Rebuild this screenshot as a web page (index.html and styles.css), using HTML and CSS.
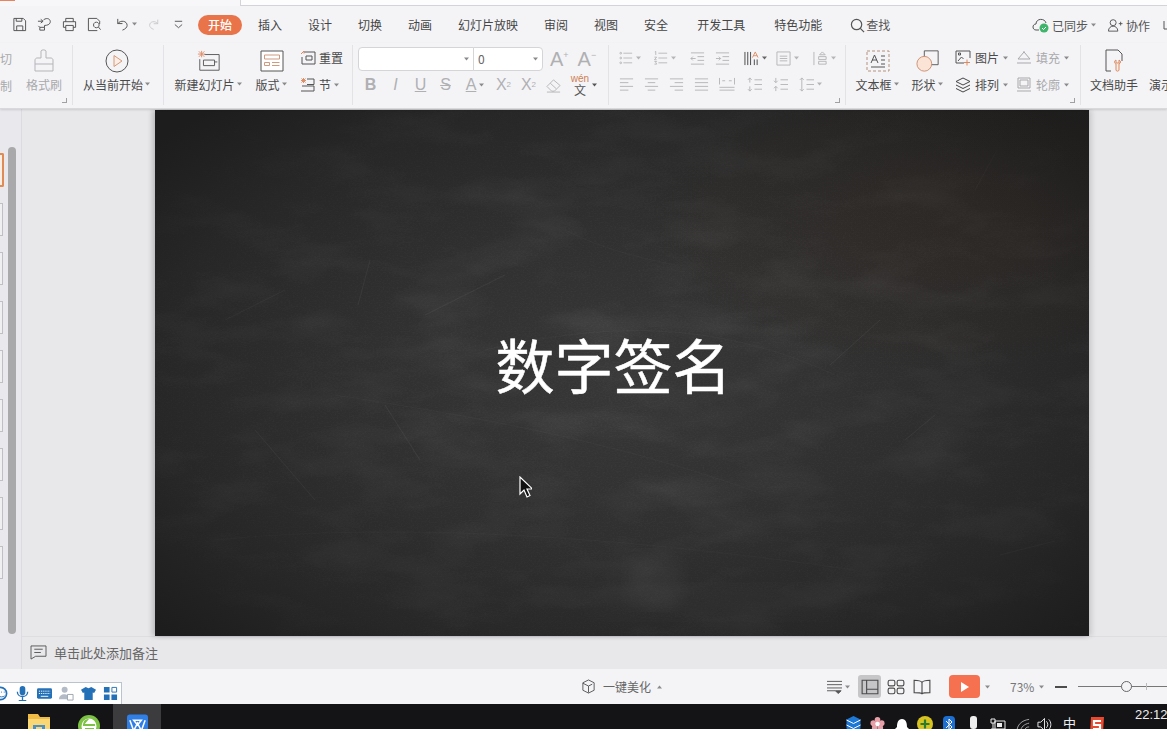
FILE: index.html
```html
<!DOCTYPE html>
<html lang="zh">
<head>
<meta charset="utf-8">
<title>数字签名</title>
<link rel="stylesheet" href="styles.css">
</head>
<body>
<svg class="defs" width="0" height="0">
  <symbol id="caret" viewBox="0 0 6 4"><path d="M0 .5h5L2.500 3.500z" fill="currentColor"/></symbol>
</svg>
<div class="app">
  <div class="topstrip"><span class="accent"></span><span class="docline"></span></div>

  <header class="menubar">
    <div class="quick">
      <svg class="q" viewBox="0 0 16 16"><path d="M2 1.500h10l2.500 2.500v10.500h-12.500zM5 14.500v-5h6.500v5M4.500 1.500v3h6v-3"/></svg>
      <svg class="q" viewBox="0 0 16 16"><path d="M1 4.500h5M4 2.500l2.500 2-2.500 2M7 3c4-3 8-.5 7 3-.6 2-3 3-6 3v2M8 11h-5v3h5zM3 11l-1.500-1.500"/></svg>
      <svg class="q" viewBox="0 0 16 16"><path d="M4 5v-3.500h8v3.500M4 11h-2.500v-6h13v6h-2.500M4 9h8v5.500h-8z"/></svg>
      <svg class="q" viewBox="0 0 16 16"><path d="M11 14.500h-9.500v-13h9l3 3v3M10 5.500a3 3 0 1 1-.1 0M12 10.500l2.500 3"/></svg>
      <svg class="q undo" viewBox="0 0 16 16"><path d="M4 2v5h5M4 7c3-4 10-3 10 2 0 2-2 4-5 5"/></svg>
      <svg class="car q-car"><use href="#caret"/></svg>
      <svg class="q redo" viewBox="0 0 16 16"><path d="M12 2v5h-5M12 7c-3-4-10-3-10 2 0 2 2 4 5 5"/></svg>
      <svg class="q more" viewBox="0 0 12 12"><path d="M2 2.500h8M2 6l4 3.500 4-3.500"/></svg>
    </div>
    <nav class="tabs">
      <span class="tab on">开始</span>
      <span class="tab t1">插入</span>
      <span class="tab t2">设计</span>
      <span class="tab t2">切换</span>
      <span class="tab t2">动画</span>
      <span class="tab t2">幻灯片放映</span>
      <span class="tab t3">审阅</span>
      <span class="tab t2">视图</span>
      <span class="tab t2">安全</span>
      <span class="tab t4">开发工具</span>
      <span class="tab t5">特色功能</span>
      <span class="search"><svg viewBox="0 0 16 16"><circle cx="7" cy="7" r="5.500"/><path d="M11 11l4 4"/></svg>查找</span>
    </nav>
    <div class="account">
      <span class="sync"><svg viewBox="0 0 18 16"><path d="M7 13h-3c-4 0-4-6 0-6 0-6 9-6 10-1" fill="none" stroke="#555"/><circle cx="12" cy="11" r="4.500" fill="#3fb56b"/><path d="M10 11l1.500 1.500 2.500-2.500" stroke="#fff" fill="none"/></svg>已同步<svg class="car"><use href="#caret"/></svg></span>
      <span class="collab"><svg viewBox="0 0 16 16"><circle cx="6" cy="5" r="3.200"/><path d="M1 14c0-7 10-7 10 0zM12 6h4M14 4v4"/></svg>协作</span>
      <svg class="cut-icon" viewBox="0 0 8 12"><path d="M1 2v8h7"/></svg>
    </div>
  </header>

  <section class="ribbon">
    <div class="grp g1">
      <div class="clip-col"><span class="clip">剪切</span><span class="clip">复制</span></div>
      <div class="big off painter">
        <svg class="bi" viewBox="0 0 22 24"><path d="M8 9v-7c0-1.500 5-1.500 5 0v7h5c1 0 2 1 2 2v4h-18v-4c0-1 1-2 2-2zM2 15v7h18v-7"/></svg>
        <span>格式刷</span>
      </div>
      <i class="corner"></i>
    </div>

    <div class="grp g2">
      <div class="big">
        <svg class="bi" viewBox="0 0 24 24"><circle cx="12" cy="12" r="11" fill="none" stroke="#555"/><path d="M9 6.500l8 5.500-8 5.500z" fill="#fbeee6" stroke="#d59a79"/></svg>
        <span>从当前开始<svg class="car"><use href="#caret"/></svg></span>
      </div>
    </div>

    <div class="grp g3">
      <div class="big new-slide">
        <svg class="bi wide" viewBox="0 0 26 24"><path d="M8 5h16v17h-21v-12M7 11h12v6h-12zM19 13h3" fill="none"/><path d="M2 1.500l6 6M8 1.500l-6 6M1 4.500h8M5 1v7" stroke="#de8e68"/></svg>
        <span>新建幻灯片<svg class="car"><use href="#caret"/></svg></span>
      </div>
      <div class="big layout">
        <svg class="bi wide" viewBox="0 0 24 22"><path d="M1 1h22v20h-22z" fill="#fff"/><path d="M4.500 5h15v4h-15zM4.500 12.500h5v3h-5zM12 12.500h7.500M12 15.500h7.500" stroke="#cf9a80"/></svg>
        <span>版式<svg class="car"><use href="#caret"/></svg></span>
      </div>
      <div class="stack">
        <div class="mini"><svg viewBox="0 0 16 16"><path d="M4 2h11v12h-13v-7M6 6h6v4h-6z"/><path d="M1 4l3-3v2.500" stroke="#d98a63"/></svg>重置</div>
        <div class="mini"><svg viewBox="0 0 16 16"><path d="M7 2h7v5.500h-7M2 9h12v5h-13"/><path d="M1.500 1.500l4 4M5.500 1.500l-4 4M1 3.500h5M3.500 1v5" stroke="#de8e68"/></svg>节<svg class="car"><use href="#caret"/></svg></div>
      </div>
    </div>

    <div class="grp g4">
      <div class="row r-top">
        <div class="field fname"><svg class="car"><use href="#caret"/></svg></div>
        <div class="field fsize"><span>0</span><svg class="car"><use href="#caret"/></svg></div>
        <span class="grow-a a1">A<sup>+</sup></span>
        <span class="grow-a a2">A<sup>−</sup></span>
      </div>
      <div class="row r-fmt">
        <b class="cell latin">B</b>
        <i class="cell latin">I</i>
        <span class="cell latin ul">U</span>
        <span class="cell latin st">S</span>
        <span class="cell acolor latin">A<svg class="car"><use href="#caret"/></svg></span>
        <span class="cell latin">X<sup>2</sup></span>
        <span class="cell latin">X<sub>2</sub></span>
        <span class="cell"><svg class="s16" viewBox="0 0 16 16"><path d="M1 9l7-7 7 6-6 6h-3zM4.500 5.500l6.500 6M1 15h14"/></svg></span>
        <span class="cell wen"><em>wén</em><u>文</u></span><svg class="car wen-car"><use href="#caret"/></svg>
      </div>
    </div>

    <div class="grp g5">
      <div class="row p1">
        <svg class="s16 p-a" viewBox="0 0 16 16"><path d="M5 2.500h10M5 8h10M5 13.500h10"/><circle cx="2" cy="2.500" r="1"/><circle cx="2" cy="8" r="1"/><circle cx="2" cy="13.500" r="1"/></svg><svg class="car pc"><use href="#caret"/></svg>
        <svg class="s16 p-b" viewBox="0 0 16 16"><path d="M5 2.500h10M5 8h10M5 13.500h10M1 1l1-.5v4M.5 7h2.500l-2.500 3h2.500M.5 12h2.500l-1 1 1 2h-2.500"/></svg><svg class="car pc"><use href="#caret"/></svg>
        <svg class="s16 p-c" viewBox="0 0 16 16"><path d="M1 2h14M8 6h7M8 10h7M1 14h14M6 8h-5M3 6l-2 2 2 2"/></svg>
        <svg class="s16 p-d" viewBox="0 0 16 16"><path d="M1 2h14M8 6h7M8 10h7M1 14h14M1 8h5M4 6l2 2-2 2"/></svg>
        <svg class="s16 p-e dark" viewBox="0 0 16 16"><path d="M1 1v14M4 1v14M7 1v14M11 15v-6M14 15v-6"/><path d="M9 7l3-6 3 6M10 5h4" stroke="#de8e68"/></svg><svg class="car pc dk"><use href="#caret"/></svg>
        <svg class="s16 p-f" viewBox="0 0 16 16"><path d="M1 1h14v14h-14zM4 5.500h8M4 8h8M4 10.500h8"/></svg><svg class="car pc"><use href="#caret"/></svg>
        <svg class="s16 p-g" viewBox="0 0 16 16"><path d="M1 1v14M10 1l3 3h-6zM6 6h8v3h-8zM6 11h8v3h-8z"/></svg><svg class="car pc"><use href="#caret"/></svg>
      </div>
      <div class="row p2">
        <svg class="s16 a-a" viewBox="0 0 16 16"><path d="M1 2h14M1 6h9M1 10h14M1 14h9"/></svg>
        <svg class="s16 a-a" viewBox="0 0 16 16"><path d="M1 2h14M4 6h8M1 10h14M4 14h8"/></svg>
        <svg class="s16 a-a" viewBox="0 0 16 16"><path d="M1 2h14M6 6h9M1 10h14M6 14h9"/></svg>
        <svg class="s16 a-a" viewBox="0 0 16 16"><path d="M1 2h14M1 6h14M1 10h14M1 14h14"/></svg>
        <svg class="s16 a-b" viewBox="0 0 18 16"><path d="M1 1v7M17 1v7M4 4h3M11 4h3M1 11h16M1 14h16"/></svg>
        <svg class="s16 a-c" viewBox="0 0 16 16"><path d="M3 1v5M1 3l2-2 2 2M3 15v-5M1 13l2 2 2-2M8 3h8M8 8h8M8 13h8"/></svg>
        <svg class="s16 a-c" viewBox="0 0 16 16"><path d="M3 1v5M1 4l2 2 2-2M3 15v-5M1 12l2-2 2 2M8 3h8M8 8h8M8 13h8"/></svg>
        <svg class="s16 a-c" viewBox="0 0 16 16"><path d="M3 1v14M1 3l2-2 2 2M1 13l2 2 2-2M8 3h8M8 8h8M8 13h8"/></svg><svg class="car pc"><use href="#caret"/></svg>
      </div>
      <i class="corner"></i>
    </div>

    <div class="grp g6">
      <div class="big tb">
        <svg class="bi wide" viewBox="0 0 24 22"><path d="M1 1h22v20h-22z" stroke-dasharray="3 2" stroke="#b5927e"/><path d="M5 13l3.500-8 3.500 8M6 10h5M15 6h4M15 10h4M15 14h4M5 17h14"/></svg>
        <span>文本框<svg class="car"><use href="#caret"/></svg></span>
      </div>
      <div class="big shp">
        <svg class="bi wide" viewBox="0 0 26 24"><path d="M9 1h15v15h-15z"/><circle cx="9" cy="15" r="8" fill="#fbe3d6" stroke="#c98f70"/></svg>
        <span>形状<svg class="car"><use href="#caret"/></svg></span>
      </div>
      <div class="stack st-b">
        <div class="mini m2"><svg viewBox="0 0 16 16"><path d="M9 13h-8v-12h14v7M3 11l3.500-4 2 2M3.500 3h2v2h-2z"/><path d="M12 9.500v6M9 12.500h6" stroke="#d98a63"/></svg>图片<svg class="car"><use href="#caret"/></svg></div>
        <div class="mini m2"><svg viewBox="0 0 16 16"><path d="M8 1l7 3.500-7 3.500-7-3.500zM1 8l7 3.500 7-3.500M1 11.500l7 3.500 7-3.500" stroke="#444"/></svg>排列<svg class="car"><use href="#caret"/></svg></div>
      </div>
      <div class="stack st-c">
        <div class="mini m2 off"><svg viewBox="0 0 16 16"><path d="M2 9l6-7 6 7zM1 13h14M8 2v-1" stroke="#a9a9ac"/></svg>填充<svg class="car"><use href="#caret"/></svg></div>
        <div class="mini m2 off"><svg viewBox="0 0 16 16"><path d="M2 1h12v10h-12zM4 3h8v6h-8zM1 14h14" stroke="#a9a9ac"/></svg>轮廓<svg class="car"><use href="#caret"/></svg></div>
      </div>
      <i class="corner"></i>
    </div>

    <div class="grp g7">
      <div class="big doc">
        <svg class="bi wide" viewBox="0 0 20 24"><path d="M7 22h-5v-21h12l4 4v7"/><path d="M12 11c-2 1-2 3 0 4v6c0 1.500 3 1.500 3 0v-6c2-1 2-3 0-4v3h-3z" stroke="#d98a63" fill="#fbeee6"/></svg>
        <span>文档助手</span>
      </div>
      <div class="big demo">
        <svg class="bi wide" viewBox="0 0 20 24"><path d="M16 3v3M14 4h5"/></svg>
        <span>演示工具</span>
      </div>
    </div>
  </section>

  <main class="work">
    <aside class="thumbs">
      <div class="thumb sel"></div>
      <div class="thumb"></div><div class="thumb"></div><div class="thumb"></div><div class="thumb"></div>
      <div class="thumb"></div><div class="thumb"></div><div class="thumb"></div><div class="thumb"></div>
      <div class="scroll"></div>
    </aside>
    <div class="editor">
      <div class="stage">
        <div class="slide">
          <svg class="chalk" viewBox="0 0 934 526" preserveAspectRatio="none">
            <defs>
              <filter id="cloud" x="0" y="0" width="100%" height="100%">
                <feTurbulence type="fractalNoise" baseFrequency="0.012 0.03" numOctaves="5" seed="12"/>
                <feColorMatrix values="0 0 0 0 1  0 0 0 0 1  0 0 0 0 1  0.9 0.9 0 0 -0.8"/>
              </filter>
              <filter id="grain" x="0" y="0" width="100%" height="100%">
                <feTurbulence type="fractalNoise" baseFrequency="0.5 0.8" numOctaves="2" seed="9"/>
                <feColorMatrix values="0 0 0 0 1  0 0 0 0 1  0 0 0 0 1  0.5 0 0 0 -0.18"/>
              </filter>
              <filter id="soft"><feGaussianBlur stdDeviation="8 14"/></filter>
              <radialGradient id="mask-g" cx="50%" cy="52%" r="62%">
                <stop offset="0" stop-color="#fff"/><stop offset=".75" stop-color="#888"/><stop offset="1" stop-color="#222"/>
              </radialGradient>
              <mask id="vig"><rect width="934" height="526" fill="url(#mask-g)"/></mask>
            </defs>
            <g mask="url(#vig)">
              <rect width="934" height="526" filter="url(#cloud)" opacity=".1"/>
              <rect width="934" height="526" filter="url(#grain)" opacity=".14"/>
              <g class="scratch">
                <path d="M270 205l80-40M130 180l-60 30M675 255l50-45M820 80l22-40M750 330l30-25M215 150l-12 45M230 295l35 55M845 445l55-14M100 320l60 70"/>
                <path class="faint" d="M180 285c130 20 280 45 430 100M330 240c90-20 210-40 350 25M60 430c200-20 430 0 640 30M410 120c30 15 60 25 110 35"/>
              </g>
              <ellipse cx="500" cy="470" rx="28" ry="26" fill="#8b8b8b" opacity=".14" filter="url(#soft)"/>
              <ellipse cx="560" cy="492" rx="130" ry="16" fill="#777" opacity=".1" filter="url(#soft)"/>
            </g>
          </svg>
          <h1 class="title">数字签名</h1>
          <svg class="pointer" viewBox="0 0 13 22"><path d="M1 1v17l4-4 3 7 3-1.500-3-6.500h5.500z" fill="#111" stroke="#fff" stroke-width="1.200"/></svg>
        </div>
      </div>
      <div class="notes">
        <svg viewBox="0 0 18 16"><path d="M1 1h16v11h-11l-5 3zM4.500 4.500h9M4.500 8h7"/></svg>
        <span>单击此处添加备注</span>
      </div>
    </div>
  </main>

  <footer class="status">
    <div class="ime">
      <svg class="ime-i smile" viewBox="0 0 16 16"><circle cx="8" cy="8" r="6.500" fill="none" stroke="#2571b8" stroke-width="1.800"/><path d="M9 6v1M12 6v1M5.500 10.500c2 1.500 5 1.500 7 0" stroke="#2571b8" fill="none"/></svg>
      <svg class="ime-i" viewBox="0 0 16 16"><rect x="5" y="0" width="6" height="10" rx="3" fill="#2571b8"/><path d="M2.500 6c0 7 11 7 11 0M8 12v3M4 15.500h8" stroke="#2571b8" fill="none" stroke-width="1.400"/></svg>
      <svg class="ime-i" viewBox="0 0 16 16"><rect x="0" y="2.500" width="16" height="11" rx="1.500" fill="#2571b8"/><path d="M2 5.500h12M2 8h12" stroke="#fff" stroke-dasharray="1.300 1"/><path d="M4 11h8" stroke="#fff"/></svg>
      <svg class="ime-i" viewBox="0 0 16 16"><circle cx="6" cy="4" r="3.200" fill="#b3bcc6"/><path d="M0 14c0-7 11-7 11 0z" fill="#b3bcc6"/><path d="M9 9h6v6h-6z" fill="#fff" stroke="#9aa4ae"/></svg>
      <svg class="ime-i" viewBox="0 0 16 16"><path d="M5 1l3 1.500 3-1.500 5 3-2 3.500-1.500-.7v8.200h-9v-8.200l-1.500.7-2-3.500z" fill="#2571b8"/></svg>
      <svg class="ime-i" viewBox="0 0 16 16"><path d="M1 1h6v6h-6zM1 9h6v6h-6zM9 9h6v6h-6z" fill="#2571b8"/><path d="M9.500 1.500h5v5h-5z" fill="none" stroke="#2571b8"/></svg>
    </div>
    <div class="beautify">
      <svg viewBox="0 0 16 16"><path d="M8 1l6 3v8l-6 3-6-3v-8zM2 4.500l6 3 4-2M8 7.500v7"/></svg>
      <span>一键美化</span><svg class="car flip"><use href="#caret"/></svg>
    </div>
    <div class="st-right">
      <svg class="si" viewBox="0 0 16 14"><path d="M0 1h16M0 4.500h16M0 8h16M0 11h9"/><path d="M9 11h6l-3 3z" fill="#555"/></svg><svg class="car st-car"><use href="#caret"/></svg>
      <span class="view on"><svg viewBox="0 0 16 16"><path d="M1 2h14v12h-14zM5 2v12M5 10h10"/></svg></span>
      <span class="view v2"><svg viewBox="0 0 16 16"><rect x="1" y="2" width="6" height="5" rx="1.500"/><rect x="9" y="2" width="6" height="5" rx="1.500"/><rect x="1" y="9" width="6" height="5" rx="1.500"/><rect x="9" y="9" width="6" height="5" rx="1.500"/></svg></span>
      <span class="view v3"><svg viewBox="0 0 16 16"><path d="M8 4c-1-2-4-2-7-2v11c3 0 6 0 7 1 1-1 4-1 7-1v-11c-3 0-6 0-7 2zM8 4v10"/></svg></span>
      <span class="play"><svg viewBox="0 0 10 12"><path d="M1 1l8 5-8 5z" fill="#fff"/></svg></span><svg class="car play-car"><use href="#caret"/></svg>
      <span class="zoomv">73%</span><svg class="car z-car"><use href="#caret"/></svg>
      <span class="minus"></span>
      <div class="slider"><span class="knob"></span><span class="tick"></span></div>
    </div>
  </footer>

  <div class="taskbar">
    <svg class="tk folder" viewBox="0 0 22 24"><path d="M0 0h10l2 3h10v21h-22z" fill="#f0bb45"/><path d="M0 5h22v19h-22z" fill="#f8d774"/><path d="M5 11h12v10h-12z" fill="#4a90c8"/><path d="M8 13h6v3h-6z" fill="#f8d774"/></svg>
    <svg class="tk globe" viewBox="0 0 22 24"><circle cx="11" cy="12" r="11" fill="#7dc242"/><circle cx="11" cy="12" r="7.500" fill="#fff"/><path d="M5 10h12v2h-12zM7 14h9v2h-9zM5 12c0-6 3-7 6-7" fill="#7dc242"/></svg>
    <span class="tk-active"><svg viewBox="0 0 22 24"><rect width="22" height="24" rx="3" fill="#2f7fe6"/><path d="M3 6l4 11 4-8 4 8 4-11M7 6h8l-4 5z" fill="none" stroke="#fff" stroke-width="1.600"/></svg></span>
    <div class="tray">
      <svg class="ty t-a" viewBox="0 0 14 18"><path d="M7 0l7 3.500v9l-7 4-7-4v-9z" fill="#1e78d6"/><path d="M0 4l7 3.500 7-3.500M0 9l7 3.500 7-3.500" stroke="#fff" fill="none"/></svg>
      <svg class="ty t-b" viewBox="0 0 16 18"><circle cx="8" cy="3.500" r="3" fill="#e8a0a8"/><circle cx="3.500" cy="7" r="3" fill="#e8a0a8"/><circle cx="12.500" cy="7" r="3" fill="#e8a0a8"/><circle cx="5" cy="12" r="3" fill="#e8a0a8"/><circle cx="11" cy="12" r="3" fill="#e8a0a8"/><circle cx="8" cy="8" r="2.500" fill="#fff"/></svg>
      <svg class="ty t-c" viewBox="0 0 14 18"><path d="M2 11c0-4 1-8 5-8s5 4 5 8l2 2h-14z" fill="#fff"/></svg>
      <svg class="ty t-d" viewBox="0 0 16 18"><circle cx="8" cy="8" r="8" fill="#d8c321"/><path d="M8 3.500v9M3.500 8h9" stroke="#2b7a2d" stroke-width="2.200"/></svg>
      <svg class="ty t-e" viewBox="0 0 12 18"><rect width="12" height="20" rx="4" fill="#1c6fd0"/><path d="M3 5l6 6-3 3v-11l3 3-6 6" stroke="#fff" fill="none"/></svg>
      <svg class="ty t-f" viewBox="0 0 12 18"><rect x="3" y="0" width="7" height="13" rx="3" fill="#eee"/><path d="M1 13c2 3 9 3 11 0v3h-11z" fill="#eee"/></svg>
      <svg class="ty t-g" viewBox="0 0 16 18"><path d="M5 5h10v8h-10zM1 3h4v4h-4zM1 13h4M3 7v6" stroke="#eee" fill="none"/><path d="M7 7h5v4h-5z" fill="#eee"/></svg>
      <svg class="ty t-h" viewBox="0 0 16 18"><path d="M1 16c0-7 5-12 13-13M5 16c0-5 4-8 9-9M9 16c0-3 2-5 5-5" stroke="#aaa" fill="none"/></svg>
      <svg class="ty t-i" viewBox="0 0 16 18"><path d="M1 6h3l4-4v13l-4-4h-3z" stroke="#eee" fill="none"/><path d="M10 5c2 2 2 5 0 7M12.500 3c3 3 3 8 0 11" stroke="#eee" fill="none"/></svg>
      <span class="ime-lang">中</span>
      <svg class="ty t-j" viewBox="0 0 16 18"><path d="M2 1h13l-1 16h-13z" fill="#e9492f"/><path d="M12 5h-7v4h6v4h-7" stroke="#fff" stroke-width="2.200" fill="none"/></svg>
      <span class="clock">22:12</span>
    </div>
  </div>
</div>
</body>
</html>
```

FILE: styles.css
```css
* { box-sizing: border-box; }
html, body { margin: 0; padding: 0; width: 1167px; height: 729px; overflow: hidden; }
body { font-family: "Noto Sans CJK SC", "Liberation Sans", sans-serif; font-size: 12px; color: #4a4a4a; }
.defs { position: absolute; }
svg { display: block; flex: none; fill: none; stroke: #555; stroke-width: 1; }
.car { width: 6px; height: 4px; color: #8a8a8d; stroke: none; }
.car use { stroke: none; }

.app { width: 1167px; height: 729px; display: flex; flex-direction: column; background: #f4f4f7; overflow: hidden; position: relative; }

.topstrip { height: 6px; flex: none; display: flex; justify-content: space-between; background: #f7f7f9; }
.accent { width: 15px; height: 1px; background: #e8835d; }
.docline { flex: 1; margin-left: 225px; height: 6px; border-bottom: 1px solid #d4d3da; border-left: 1px solid #d4d3da; background: #fdfdfe; }

.menubar { height: 37px; flex: none; display: flex; align-items: center; padding: 1px 0 0 12px; }
.quick { display: flex; align-items: center; width: 186px; margin-top: -2px; }
.q { width: 15px; height: 15px; margin-right: 10px; stroke: #4f4f4f; }
.q.undo { margin-left: 2px; margin-right: 3px; }
.q-car { margin-right: 10px; }
.q.redo { stroke: #c4c4c7; margin-right: 12px; width: 13px; }
.q.more { width: 11px; height: 11px; margin: 0; }

.tabs { display: flex; align-items: center; line-height: 20px; }
.tab { white-space: nowrap; color: #454545; }
.tab.on { width: 44px; height: 20px; background: #e9744a; color: #fff; border-radius: 10px; text-align: center; font-weight: 500; }
.t1 { margin-left: 16px; }
.t2 { margin-left: 26px; }
.t3 { margin-left: 26px; }
.t4 { margin-left: 29px; }
.t5 { margin-left: 29px; }
.search { display: flex; align-items: center; margin-left: 28px; color: #555; }
.search svg { width: 15px; height: 15px; margin-right: 1px; stroke-width: 1.300; }

.account { display: flex; align-items: center; margin-left: auto; color: #555; }
.sync { display: flex; align-items: center; }
.sync svg:first-child { width: 18px; height: 16px; margin-right: 2px; stroke: none; }
.sync .car { margin-left: 3px; }
.collab { display: flex; align-items: center; margin-left: 10px; }
.collab svg { width: 16px; height: 15px; margin-right: 3px; }
.cut-icon { width: 8px; height: 12px; margin-left: 13px; margin-right: -4px; }

.ribbon { height: 66px; flex: none; display: flex; border-bottom: 1px solid #d9d9dc; box-shadow: 0 1px 2px rgba(0,0,0,.12); position: relative; z-index: 2; background: #f4f4f7; }
.grp { position: relative; display: flex; flex: none; height: 60px; margin-top: 2px; border-right: 1px solid #e3e3e7; }
.corner { position: absolute; right: 5px; bottom: 2px; width: 5px; height: 5px; border-right: 1px solid #a0a0a3; border-bottom: 1px solid #a0a0a3; }
.big { display: flex; flex-direction: column; align-items: center; white-space: nowrap; color: #4a4a4a; }
.big > span { display: flex; align-items: center; height: 20px; margin-top: 1px; }
.big .car { margin-left: 2px; }
.bi { width: 24px; height: 24px; margin-top: 4px; }
.off, .off span { color: #a9a9ac; }
.off .bi { stroke: #b5b5b8; }

.g1 { width: 73px; }
.clip-col { width: 15px; overflow: hidden; display: flex; flex-direction: column; gap: 7px; padding-top: 4px; }
.clip { display: block; margin-left: -12px; white-space: nowrap; color: #a9a9ac; line-height: 20px; }
.painter { margin-left: 11px; }

.g2 { width: 91px; justify-content: center; }
.g2 .big { margin-right: 2px; }

.g3 { width: 189px; padding-left: 10px; }
.new-slide { width: 69px; }
.layout { width: 33px; margin-left: 12px; }
.stack { display: flex; flex-direction: column; gap: 8px; padding-top: 3px; margin-left: 12px; }
.mini { display: flex; align-items: center; height: 19px; white-space: nowrap; color: #4a4a4a; }
.mini svg:first-child { width: 16px; height: 16px; margin-right: 3px; }
.mini .car { margin-left: 3px; }
.mini.off { color: #a9a9ac; }

.g4 { width: 256px; flex-direction: column; padding-left: 5px; }
.row { display: flex; align-items: center; }
.r-top { height: 25px; margin-top: 1px; }
.field { height: 24px; background: #fff; border: 1px solid #d5d5d8; display: flex; align-items: center; justify-content: space-between; padding: 0 3px 0 4px; }
.fname { width: 116px; border-radius: 4px 0 0 4px; justify-content: flex-end; }
.fsize { width: 70px; margin-left: -1px; border-radius: 0 4px 4px 0; color: #666; }
.grow-a { font-family: "Liberation Sans", sans-serif; color: #b0b0b3; font-size: 20px; line-height: 24px; }
.grow-a sup { font-size: 9px; vertical-align: 8px; line-height: 0; }
.a1 { margin-left: 7px; }
.a2 { margin-left: 9px; }
.r-fmt { height: 24px; margin-top: 2px; margin-left: 0; }
.cell { width: 25px; display: flex; justify-content: center; align-items: center; color: #b0b0b3; font-style: normal; position: relative; }
.latin { font-family: "Liberation Sans", sans-serif; font-size: 16px; }
i.cell { font-style: italic; }
.ul { text-decoration: underline; }
.st { text-decoration: line-through; }
.acolor { width: 33px; border: 0; text-decoration: underline; gap: 3px; padding-left: 2px; }
.cell sup, .cell sub { font-size: 8px; line-height: 0; }
.s16 { width: 15px; height: 15px; stroke: #b5b5b8; }
.wen { display: block; width: 22px; text-align: center; margin-left: 3px; }
.wen em { display: block; font-family: "Liberation Sans", sans-serif; font-style: normal; color: #cf7f53; font-size: 10px; line-height: 10px; }
.wen u { display: block; color: #555; font-size: 12px; line-height: 12px; text-decoration: none; }
.wen-car { margin-left: 1px; color: #555; }

.g5 { width: 237px; flex-direction: column; padding-left: 10px; }
.p1 { height: 24px; margin-top: 1px; }
.pc { margin-left: 3px; color: #b5b5b8; }
.pc.dk { color: #666; }
.p-a { width: 14px; height: 14px; }
.p-b { margin-left: 12px; width: 14px; height: 14px; }
.p-c { margin-left: 13px; }
.p-d { margin-left: 10px; }
.p-e { margin-left: 14px; stroke: #444; }
.p-f { margin-left: 8px; }
.p-g { margin-left: 13px; }
.p2 { height: 24px; margin-top: 2px; gap: 10px; }
.a-b { width: 18px; margin-left: -1px; }
.a-c { margin-left: 1px; }
.p2 .pc { margin-left: -7px; }

.g6 { width: 235px; padding-left: 9px; }
.tb { width: 45px; }
.shp { width: 35px; margin-left: 10px; }
.st-b { margin-left: 10px; }
.st-c { margin-left: 7px; }
.m2 .car { margin-left: 4px; }
.m2 svg:first-child { margin-right: 4px; }

.g7 { width: 160px; padding-left: 9px; border-right: 0; gap: 11px; }
.doc { width: 48px; }
.doc .bi { width: 20px; }

.work { flex: 1; min-height: 0; display: flex; background: #e8e7ea; }
.thumbs { width: 22px; flex: none; position: relative; display: flex; flex-direction: column; gap: 16px; padding-top: 44px; border-right: 1px solid #dcdbe0; background: #e9e8ec; }
.thumb { width: 3px; height: 33px; background: #efeef1; border: 1px solid #c0c0c3; border-left: 0; }
.thumb.sel { width: 4px; height: 34px; border: 2px solid #e08a55; border-left: 0; border-radius: 0 2px 2px 0; background: #fbeee5; }
.scroll { position: absolute; left: 8px; top: 38px; width: 8px; height: 487px; background: #a9a8ab; border-radius: 4px; }

.editor { flex: 1; display: flex; flex-direction: column; min-width: 0; }
.stage { height: 527px; flex: none; padding-left: 133px; }
.slide { width: 934px; height: 526px; margin-top: 1px; position: relative; display: flex; justify-content: center; background:
  radial-gradient(ellipse 34% 30% at 84% 22%, rgba(60,40,28,.22), transparent),
  radial-gradient(ellipse 66% 70% at 50% 52%, #373737 0%, #303030 42%, #272727 76%, #1d1d1d 100%);
  box-shadow: -3px 0 5px rgba(0,0,0,.18), 3px 0 5px rgba(0,0,0,.12); }
.chalk { position: absolute; inset: 0; width: 100%; height: 100%; stroke: none; }
.scratch path { stroke: #fff; stroke-opacity: .07; stroke-width: 1; fill: none; }
.scratch .faint { stroke-opacity: .03; }
.title { position: relative; margin: 210px 0 0 -17px; font-size: 59px; line-height: 88px; height: 88px; font-weight: 400; -webkit-text-stroke: .5px #fff; color: #fff; white-space: nowrap; }
.pointer { position: absolute; left: 364px; top: 366px; width: 13px; height: 22px; stroke: none; }

.notes { flex: 1; display: flex; align-items: center; padding: 0 0 1px 8px; border-top: 1px solid #dedde1; color: #666; font-size: 13px; }
.notes svg { width: 17px; height: 15px; margin-right: 7px; stroke: #555; }

.status { height: 35px; flex: none; position: relative; display: flex; align-items: center; background: #f4f4f7; color: #666; }
.ime { position: absolute; left: 0; top: 13px; width: 122px; height: 22px; background: #fff; border: 1px solid #b9c4d0; border-left: 0; border-bottom: 0; display: flex; align-items: center; gap: 7px; overflow: hidden; padding-left: 0; }
.ime-i { width: 15px; height: 15px; stroke: none; }
.smile { margin-left: -7px; }
.beautify { display: flex; align-items: center; margin-left: 581px; white-space: nowrap; }
.beautify svg:first-child { width: 15px; height: 15px; margin-right: 7px; }
.beautify span { line-height: 16px; }
.flip { transform: rotate(180deg); margin-left: 5px; }
.st-right { display: flex; align-items: center; margin-left: 165px; flex: 1; }
.si { width: 15px; height: 14px; }
.st-car { margin-left: 3px; }
.view { width: 23px; height: 23px; display: flex; align-items: center; justify-content: center; border-radius: 3px; margin-left: 4px; }
.view.on { background: #c6c6c8; margin-left: 7px; }
.view svg { width: 18px; height: 18px; stroke: #4c4c4c; }
.v2 { margin-left: 3px; }
.v3 { margin-left: 3px; }
.play { width: 31px; height: 23px; background: #f5714f; border-radius: 4px; display: flex; align-items: center; justify-content: center; margin-left: 16px; }
.play svg { width: 10px; height: 12px; stroke: none; }
.play-car { margin-left: 5px; }
.zoomv { margin-left: 19px; color: #777; font-size: 12px; }
.z-car { margin-left: 5px; }
.minus { width: 12px; height: 2px; background: #4c4c4c; margin-left: 10px; }
.slider { position: relative; height: 1px; flex: 1; background: #777; margin-left: 11px; margin-right: -1px; }
.knob { position: absolute; left: 43px; top: -5px; width: 11px; height: 11px; border-radius: 50%; background: #f4f4f7; border: 1px solid #666; }
.tick { position: absolute; left: 68px; top: -3px; width: 1px; height: 7px; background: #bbb; }

.taskbar { height: 25px; flex: none; background: #141417; display: flex; align-items: flex-start; overflow: hidden; padding-left: 28px; color: #eee; }
.tk { width: 22px; height: 24px; margin-top: 10px; stroke: none; }
.globe { margin-left: 28px; }
.tk-active { width: 48px; height: 25px; background: #3c3c3f; margin-left: 13px; padding: 10px 0 0 14px; }
.tk-active svg { width: 21px; height: 24px; stroke: none; }
.tray { margin-left: auto; display: flex; align-items: flex-start; width: 322px; padding-left: 1px; }
.ty { width: 15px; height: 18px; margin-top: 12px; stroke: none; flex: none; }
.t-b { margin-left: 9px; }
.t-c { margin-left: 10px; width: 14px; }
.t-d { margin-left: 8px; width: 16px; }
.t-e { margin-left: 10px; width: 12px; }
.t-f { margin-left: 12px; width: 12px; }
.t-g { margin-left: 11px; width: 16px; }
.t-h { margin-left: 10px; width: 15px; }
.t-i { margin-left: 6px; width: 15px; }
.ime-lang { margin-left: 11px; margin-top: 10px; font-size: 13px; line-height: 18px; color: #eee; }
.t-j { margin-left: 13px; width: 16px; }
.clock { flex: none; margin-left: 30px; margin-top: 2px; font-family: "Liberation Sans", sans-serif; font-size: 13px; line-height: 18px; color: #eee; }
```
